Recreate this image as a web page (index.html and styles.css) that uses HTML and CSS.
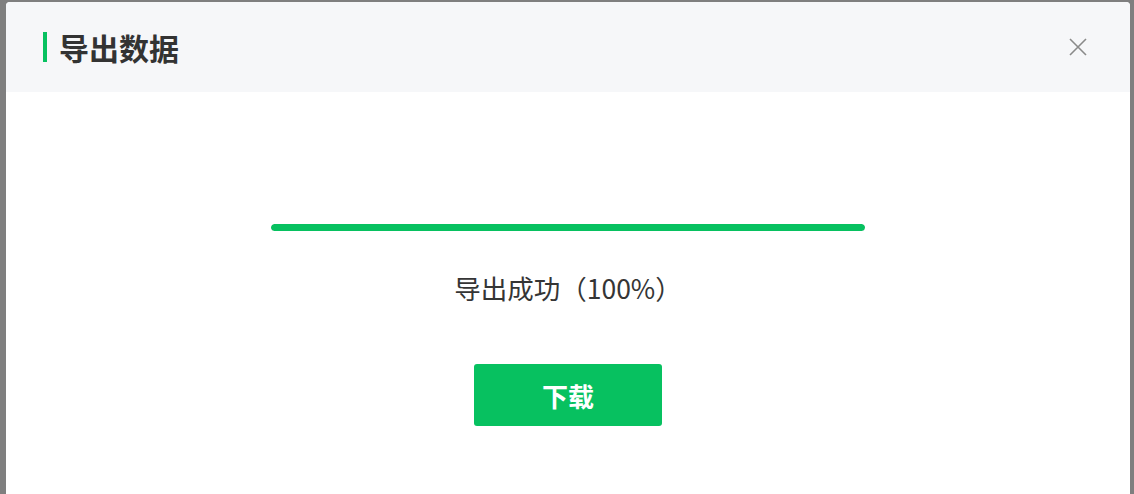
FILE: index.html
```html
<!DOCTYPE html>
<html lang="zh-CN">
<head>
    <meta charset="UTF-8">
    <meta name="viewport" content="width=device-width, initial-scale=1.0">
    <title>导出数据</title>
    <link rel="stylesheet" href="styles.css">
</head>
<body>
    <div class="mask">
        <div class="dialog">
            <div class="dialog-header">
                <h2 class="dialog-title">导出数据</h2>
                <button class="close-button" type="button" aria-label="关闭">
                    <svg width="18" height="18" viewBox="0 0 18 18">
                        <path d="M1 1 L17 17 M17 1 L1 17" stroke="#8a8a8a" stroke-width="1.6" fill="none"/>
                    </svg>
                </button>
            </div>
            <div class="dialog-body">
                <div class="progress">
                    <div class="progress-bar" style="width: 100%;"></div>
                </div>
                <p class="progress-text">导出成功（100%）</p>
                <button class="download-button" type="button">下载</button>
            </div>
        </div>
    </div>
</body>
</html>
```

FILE: styles.css
```css
body {
    margin: 0;
    background-color: #7f7f7f;
    font-family: "Noto Sans CJK SC", "Noto Sans", sans-serif;
    overflow: hidden;
}
.mask {
    padding: 2px 4px 0 6px;
    height: 494px;
    box-sizing: border-box;
    overflow: hidden;
}
.dialog {
    background-color: #fff;
    border-radius: 4px 4px 0 0;
    height: 492px;
    overflow: hidden;
}
.dialog-header {
    display: flex;
    align-items: center;
    justify-content: space-between;
    height: 90px;
    padding: 0 43px 0 37px;
    background-color: #f6f7f9;
}
.dialog-title {
    margin: 0;
    padding-left: 12px;
    border-left: 4px solid #07c160;
    height: 30px;
    line-height: 30px;
    font-size: 30px;
    font-weight: bold;
    color: #333;
}
.close-button {
    display: flex;
    padding: 0;
    border: none;
    background: none;
    cursor: pointer;
}
.dialog-body {
    display: flex;
    flex-direction: column;
    align-items: center;
    padding-top: 132px;
}
.progress {
    width: 594px;
    height: 7px;
    border-radius: 4px;
    background-color: #e6e6e6;
    overflow: hidden;
}
.progress-bar {
    height: 100%;
    border-radius: 4px;
    background-color: #07c160;
}
.progress-text {
    margin: 39px 0 0;
    line-height: 36px;
    font-size: 26.5px;
    color: #353535;
}
.download-button {
    margin-top: 58px;
    width: 188px;
    height: 62px;
    border: none;
    border-radius: 3px;
    background-color: #07c160;
    color: #fff;
    font-family: inherit;
    font-size: 26px;
    font-weight: bold;
    cursor: pointer;
}
```
